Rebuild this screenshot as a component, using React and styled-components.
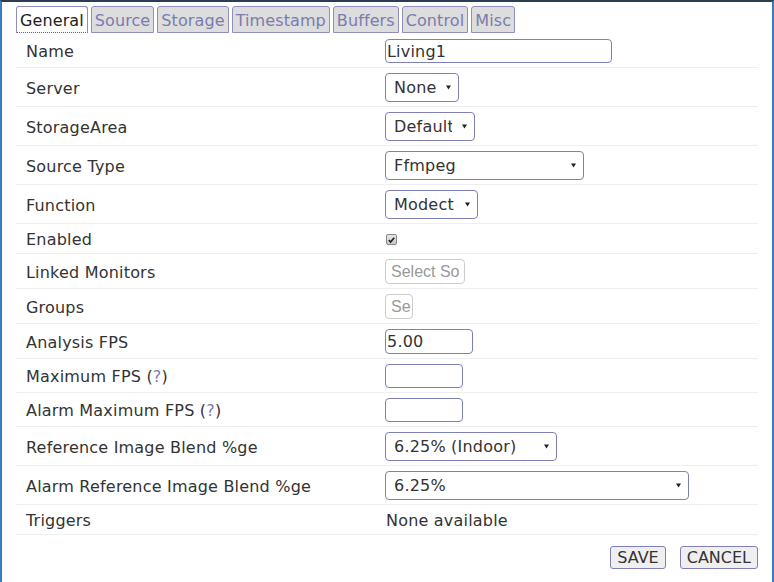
import React from "react";
import styled, { createGlobalStyle } from "styled-components";

const GlobalStyle = createGlobalStyle`
  html, body {
    margin: 0;
    padding: 0;
    background: #ffffff;
  }
  body {
    font-family: "DejaVu Sans", Verdana, sans-serif;
    font-size: 16px;
    color: #333333;
  }
`;

const Frame = styled.div`
  box-sizing: border-box;
  height: 100vh;
  border-top: 2px solid #2b3e52;
  border-left: 2px solid #3b7cc1;
  border-right: 2px solid #3b7cc1;
  padding: 4px 14px 0 14px;
`;

const TabBar = styled.ul`
  display: flex;
  list-style: none;
  margin: 0;
  padding: 0;
  gap: 3px;
`;

const Tab = styled.li`
  box-sizing: border-box;
  height: 27px;
  line-height: 27px;
  padding: 0 3px;
  font-size: 16px;
  letter-spacing: 0.1px;
  border: 1px solid #8e8ebf;
  border-bottom: ${(p) => (p.active ? "1px dotted #666" : "1px solid #8e8ebf")};
  border-radius: 3px 3px 0 0;
  background: ${(p) => (p.active ? "#ffffff" : "#dddddd")};
  color: ${(p) => (p.active ? "#222222" : "#7b7bb0")};
`;

const Form = styled.div`
  display: flex;
  flex-direction: column;
  margin-top: 1px;
`;

const Row = styled.div`
  display: grid;
  grid-template-columns: 359px 1fr;
  align-items: center;
  padding: 5px 0 4px;
  border-bottom: 1px solid #eeeeee;
`;

const Label = styled.div`
  padding: 1px 0 0 10px;
  line-height: 19px;
  letter-spacing: 0.2px;
  color: #333333;
`;

const Value = styled.div`
  display: flex;
  align-items: center;
  padding-left: 10px;
  min-height: 20px;
`;

const Help = styled.span`
  color: #7b7bb0;
`;

const TextField = styled.input`
  box-sizing: border-box;
  width: ${(p) => p.w}px;
  height: ${(p) => p.h || 24}px;
  padding: 0 1px;
  margin: 0;
  border: 1px solid #8080b8;
  border-radius: 4px;
  font-family: "DejaVu Sans", Verdana, sans-serif;
  font-size: 16px;
  letter-spacing: 0.2px;
  color: #333333;
  background: #ffffff;
  outline: none;
`;

const SelectWrap = styled.div`
  position: relative;
  display: inline-block;
`;

const Select = styled.select`
  box-sizing: border-box;
  appearance: none;
  -webkit-appearance: none;
  width: ${(p) => p.w}px;
  height: 29px;
  margin: 0;
  padding: 0 22px 0 8px;
  border: 1px solid #8080b8;
  border-radius: 4px;
  background: #ffffff;
  font-family: "DejaVu Sans", Verdana, sans-serif;
  font-size: 16px;
  letter-spacing: 0.2px;
  color: #333333;
  outline: none;
`;

const Arrow = styled.svg`
  position: absolute;
  right: 8px;
  top: 12px;
  pointer-events: none;
`;

const Checkbox = styled.span`
  box-sizing: border-box;
  display: inline-flex;
  align-items: center;
  justify-content: center;
  width: 11px;
  height: 11px;
  margin: 1px 0 0 1px;
  border: 1px solid #8a8a8a;
  border-radius: 2px;
  background: linear-gradient(#e8e8e8, #c8c8c8);
`;

const Chosen = styled.div`
  box-sizing: border-box;
  width: ${(p) => p.w}px;
  height: 25px;
  padding-left: 5px;
  border: 1px solid #cccccc;
  border-radius: 4px;
  overflow: hidden;
  white-space: nowrap;
  font-family: "Liberation Sans", Arial, sans-serif;
  font-size: 16px;
  line-height: 23px;
  color: #999999;
`;

const PlainText = styled.span`
  line-height: 19px;
  padding: 1px 0 0 1px;
  letter-spacing: 0.2px;
`;

const Buttons = styled.div`
  display: flex;
  justify-content: flex-end;
  gap: 14px;
  padding-top: 11px;
`;

const Button = styled.button`
  box-sizing: border-box;
  height: 23px;
  padding: 0 6px;
  margin: 0;
  border: 1px solid #8080b8;
  border-radius: 3px;
  background: #efefef;
  font-family: "DejaVu Sans", Verdana, sans-serif;
  font-size: 16px;
  line-height: 21px;
  color: #333333;
`;

const DropDown = ({ w, value }) => (
  <SelectWrap>
    <Select w={w} defaultValue={value}>
      <option>{value}</option>
    </Select>
    <Arrow width="5" height="5" viewBox="0 0 5 5">
      <polygon points="0,0.5 5,0.5 2.5,4.5" fill="#222" />
    </Arrow>
  </SelectWrap>
);

const tabs = ["General", "Source", "Storage", "Timestamp", "Buffers", "Control", "Misc"];

const rows = [
  { label: "Name", field: <TextField w={227} defaultValue="Living1" /> },
  { label: "Server", field: <DropDown w={74} value="None" /> },
  { label: "StorageArea", field: <DropDown w={90} value="Default" /> },
  { label: "Source Type", field: <DropDown w={199} value="Ffmpeg" /> },
  { label: "Function", field: <DropDown w={93} value="Modect" /> },
  {
    label: "Enabled",
    field: (
      <Checkbox>
        <svg width="7" height="6" viewBox="0 0 7 6">
          <path d="M0.8 3.2 L2.6 5 L6.2 0.8" stroke="#222" strokeWidth="1.7" fill="none" />
        </svg>
      </Checkbox>
    ),
  },
  { label: "Linked Monitors", field: <Chosen w={80}>Select So</Chosen> },
  { label: "Groups", field: <Chosen w={28}>Se</Chosen> },
  { label: "Analysis FPS", field: <TextField w={88} h={25} defaultValue="5.00" /> },
  {
    label: (
      <>
        Maximum FPS (<Help>?</Help>)
      </>
    ),
    field: <TextField w={78} defaultValue="" />,
  },
  {
    label: (
      <>
        Alarm Maximum FPS (<Help>?</Help>)
      </>
    ),
    field: <TextField w={78} defaultValue="" />,
  },
  { label: "Reference Image Blend %ge", field: <DropDown w={172} value="6.25% (Indoor)" /> },
  { label: "Alarm Reference Image Blend %ge", field: <DropDown w={304} value="6.25%" /> },
  { label: "Triggers", field: <PlainText>None available</PlainText> },
];

const App = () => {
  return (
    <Frame>
      <GlobalStyle />
      <TabBar>
        {tabs.map((t, i) => (
          <Tab key={t} active={i === 0}>
            {t}
          </Tab>
        ))}
      </TabBar>
      <Form>
        {rows.map((r, i) => (
          <Row key={i}>
            <Label>{r.label}</Label>
            <Value>{r.field}</Value>
          </Row>
        ))}
      </Form>
      <Buttons>
        <Button>SAVE</Button>
        <Button>CANCEL</Button>
      </Buttons>
    </Frame>
  );
};

export default App;
